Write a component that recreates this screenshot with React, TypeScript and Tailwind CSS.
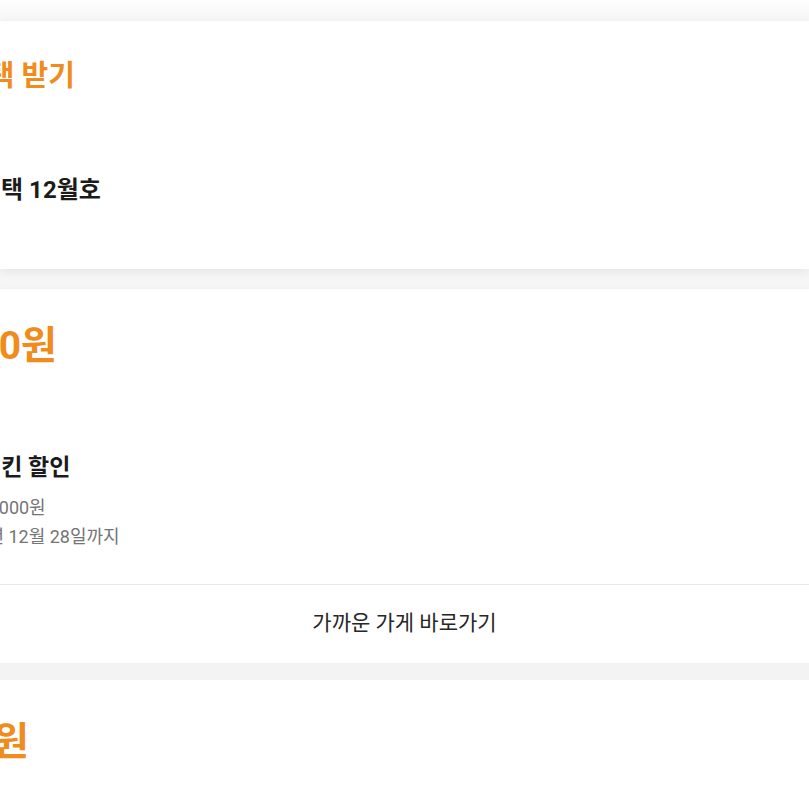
import React from 'react';

const font = { fontFamily: 'Roboto, "Noto Sans CJK KR", sans-serif' };

const orange = 'text-[#ef8c1d]';

export default function App() {
  return (
    <div className="w-[809px] h-[809px] overflow-hidden bg-[#f6f6f6]" style={font}>
      <div className="h-[21px] bg-gradient-to-b from-[#fefefe] to-[#f6f6f6]" />

      {/* 혜택 카드 */}
      <section className="h-[248px] bg-white shadow-[0_3px_10px_rgba(0,0,0,0.07)] flex flex-col">
        <div className="pt-[35px]">
          <p className={`ml-[-39px] text-[29px] leading-[40px] font-bold whitespace-nowrap ${orange}`}>
            혜택 받기
          </p>
        </div>
        <div className="pt-[78px]">
          <p className="ml-[-21px] text-[24px] leading-[32px] font-bold text-[#1b1b1b] whitespace-nowrap">
            혜택 12월호
          </p>
        </div>
      </section>

      <div className="h-[20px]" />

      {/* 쿠폰 카드 */}
      <section className="bg-white shadow-[0_2px_8px_rgba(0,0,0,0.05)]">
        <div className="h-[295px] flex flex-col">
          <div className="pt-[33px]">
            <p className={`ml-[-78px] text-[39px] leading-[48px] font-bold whitespace-nowrap ${orange}`}>
              5,000원
            </p>
          </div>
          <div className="pt-[83px]">
            <p className="ml-[-20px] text-[23px] leading-[30px] font-bold text-[#1b1b1b] whitespace-nowrap">
              치킨 할인
            </p>
          </div>
          <div className="pt-[12px] flex flex-col gap-[3px] text-[18px] leading-[26px] text-[#757575] whitespace-nowrap">
            <p className="ml-[-25px]">15,000원</p>
            <p className="ml-[-53px]">2023년 12월 28일까지</p>
          </div>
        </div>
        <div className="border-t border-[#e9e9e9] h-[79px] flex items-center justify-center">
          <span className="text-[21px] text-[#262626]">가까운 가게 바로가기</span>
        </div>
      </section>

      <div className="h-[17px] bg-[#f3f3f3]" />

      <section className="h-[200px] bg-white">
        <div className="pt-[38px]">
          <p className={`ml-[-106px] text-[39px] leading-[48px] font-bold whitespace-nowrap ${orange}`}>
            3,000원
          </p>
        </div>
      </section>
    </div>
  );
}
